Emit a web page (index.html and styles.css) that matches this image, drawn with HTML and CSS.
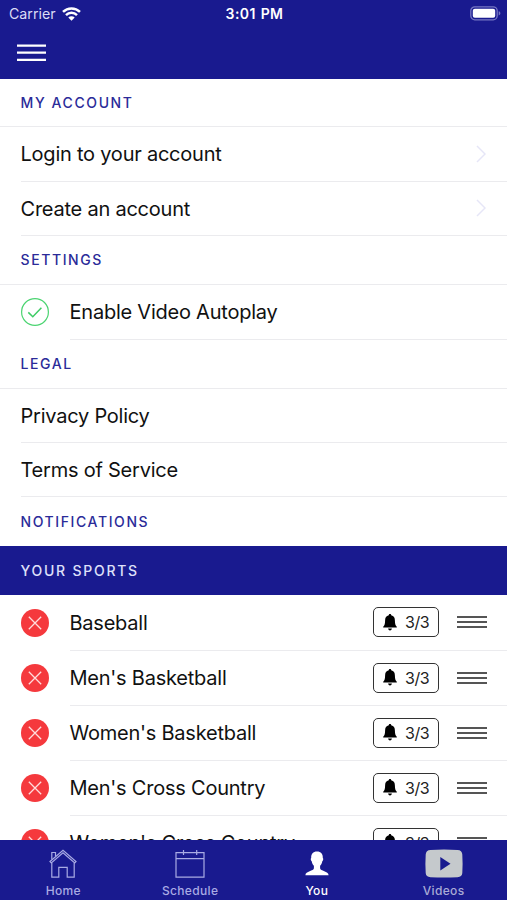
FILE: index.html
```
<!DOCTYPE html>
<html lang="en">
<head>
    <meta charset="utf-8">
    <title>My Account</title>
    <link rel="stylesheet" href="styles.css">
</head>
<body>
    <svg width="0" height="0" class="symbols">
        <symbol id="remove" viewBox="0 0 28 28">
            <circle cx="14" cy="14" r="14" fill="#f5393d"/>
            <path d="M7.8 7.8l12.4 12.4M20.2 7.8L7.8 20.2" stroke="#ffdcdc" stroke-width="1.3" fill="none"/>
        </symbol>
        <symbol id="bell" viewBox="0 0 14 17">
            <path d="M7 0c.8 0 1.2.5 1.2 1.3 2.6.6 3.7 2.6 3.7 5.1 0 3.6.6 5.2 1.9 6.3v.9H.2v-.9c1.300-1.100 1.900-2.700 1.900-6.300 0-2.500 1.100-4.500 3.700-5.100C5.800.5 6.200 0 7 0zM5.100 14.500h3.800c-.1 1.100-.8 1.900-1.900 1.900s-1.800-.8-1.900-1.900z"/>
        </symbol>
        <symbol id="chevron" viewBox="0 0 10 18">
            <path d="M1 1l8 8-8 8" fill="none" stroke="#e6e6f7" stroke-width="1.5"/>
        </symbol>
    </svg>

    <div class="app">
        <header class="header">
            <div class="status">
                <div class="carrier">
                    <span>Carrier</span>
                    <svg width="19" height="14" viewBox="0 0 19 14">
                        <g fill="none" stroke="#fff" stroke-width="2.5">
                            <path d="M1 4.900a12.200 12.200 0 0 1 17 0"/>
                            <path d="M4 8.100a7.900 7.900 0 0 1 11 0"/>
                        </g>
                        <path d="M9.500 13.700L6.300 10.500a4.600 4.600 0 0 1 6.400 0z" fill="#fff"/>
                    </svg>
                </div>
                <div class="time">3:01 PM</div>
                <svg class="battery" width="31" height="15" viewBox="0 0 31 15">
                    <rect x=".8" y=".8" width="26.4" height="13" rx="4" fill="none" stroke="#7777c3" stroke-width="1.3"/>
                    <rect x="2.8" y="2.8" width="22.4" height="9" rx="2" fill="#fff"/>
                    <path d="M28.700 5.200c2.200.7 2.200 3.500 0 4.200z" fill="#7777c3"/>
                </svg>
            </div>
            <svg class="menu" width="29" height="18" viewBox="0 0 29 18" stroke="#fff" stroke-width="2.2">
                <path d="M0 1.700h29M0 8.700h29M0 15.900h29"/>
            </svg>
        </header>

        <main class="content">
            <h2 class="section">MY ACCOUNT</h2>
            <div class="row"><span class="label">Login to your account</span><svg class="chevron"><use href="#chevron"/></svg></div>
            <div class="row"><span class="label">Create an account</span><svg class="chevron"><use href="#chevron"/></svg></div>

            <h2 class="section">SETTINGS</h2>
            <div class="row icon-row">
                <svg class="badge" viewBox="0 0 28 28">
                    <circle cx="14" cy="14" r="13.4" fill="none" stroke="#4bd471" stroke-width="1.2"/>
                    <path d="M7.300 14.400l4.500 4.300 8.600-9" fill="none" stroke="#3fcc66" stroke-width="1.5"/>
                </svg>
                <div class="cell"><span class="label">Enable Video Autoplay</span></div>
            </div>

            <h2 class="section">LEGAL</h2>
            <div class="row"><span class="label">Privacy Policy</span></div>
            <div class="row"><span class="label">Terms of Service</span></div>

            <h2 class="section last">NOTIFICATIONS</h2>
            <h2 class="section band">YOUR SPORTS</h2>

            <div class="row icon-row">
                <svg class="badge"><use href="#remove"/></svg>
                <div class="cell"><span class="label">Baseball</span><span class="alerts"><svg class="bell"><use href="#bell"/></svg>3/3</span><div class="drag"><i></i><i></i><i></i></div></div>
            </div>
            <div class="row icon-row">
                <svg class="badge"><use href="#remove"/></svg>
                <div class="cell"><span class="label">Men's Basketball</span><span class="alerts"><svg class="bell"><use href="#bell"/></svg>3/3</span><div class="drag"><i></i><i></i><i></i></div></div>
            </div>
            <div class="row icon-row">
                <svg class="badge"><use href="#remove"/></svg>
                <div class="cell"><span class="label">Women's Basketball</span><span class="alerts"><svg class="bell"><use href="#bell"/></svg>3/3</span><div class="drag"><i></i><i></i><i></i></div></div>
            </div>
            <div class="row icon-row">
                <svg class="badge"><use href="#remove"/></svg>
                <div class="cell"><span class="label">Men's Cross Country</span><span class="alerts"><svg class="bell"><use href="#bell"/></svg>3/3</span><div class="drag"><i></i><i></i><i></i></div></div>
            </div>
            <div class="row icon-row">
                <svg class="badge"><use href="#remove"/></svg>
                <div class="cell"><span class="label">Women's Cross Country</span><span class="alerts"><svg class="bell"><use href="#bell"/></svg>3/3</span><div class="drag"><i></i><i></i><i></i></div></div>
            </div>
        </main>

        <nav class="tabs">
            <div class="tab">
                <svg width="28" height="30" viewBox="0 0 28 30" fill="none" stroke="#a9abe4" stroke-width="1.2">
                    <path d="M1 12.500L14 1.200l13 11.300-1.300 1.400L14 3.800 2.300 13.900z"/>
                    <path d="M2.800 10.500V3.500h3.700v3.800"/>
                    <path d="M2.800 13.900v14.300h7V18.300h8.400v9.900h7V13.900"/>
                </svg>
                <span>Home</span>
            </div>
            <div class="tab">
                <svg width="30" height="30" viewBox="0 0 30 30" fill="none" stroke="#a9abe4" stroke-width="1.2">
                    <path d="M1 3.600h28v24.600H1zM1 9.600h28M8.500 1v5M21.700 1v5"/>
                </svg>
                <span>Schedule</span>
            </div>
            <div class="tab active">
                <svg width="24" height="30" viewBox="0 0 24 30" fill="#fff">
                    <path d="M12 2.500c4 0 6 2.500 5.800 6.500.7.300.6 2.800-.5 3.300-.4 2.200-1.200 3.500-2.200 4.500v2.400c0 3 8.500 2.600 8.500 7H.4c0-4.400 8.500-4 8.500-7v-2.400c-1-1-1.800-2.300-2.200-4.500-1.100-.5-1.200-3-.5-3.300C6 5 8 2.500 12 2.500z"/>
                </svg>
                <span>You</span>
            </div>
            <div class="tab videos">
                <svg width="38" height="30" viewBox="0 0 38 30">
                    <path d="M5.500.9Q19 0 32.500.9q4.600.2 4.800 4.600.6 9 0 18.500-.2 3.800-4.800 4.200-13.500.8-27 0Q.9 27.800.7 24 .1 15 .7 5.500.9 1.100 5.500.9z" fill="#c5c9cc"/>
                    <path d="M15.300 8v13.500L25.500 14.700z" fill="#191a8f"/>
                </svg>
                <span>Videos</span>
            </div>
        </nav>
    </div>
</body>
</html>
```
FILE: styles.css
```
* {
    box-sizing: border-box;
}
body {
    margin: 0;
    font-family: Inter, "Liberation Sans", sans-serif;
    background: #fff;
    color: #111;
}
.symbols {
    display: none;
}
.app {
    height: 900px;
    display: flex;
    flex-direction: column;
    overflow: hidden;
}
.header {
    flex: none;
    height: 78.5px;
    background: #191a8f;
    color: #fff;
}
.status {
    display: grid;
    grid-template-columns: 1fr auto 1fr;
    align-items: center;
    height: 27px;
    padding: 0 6px 0 9px;
}
.carrier {
    display: flex;
    align-items: center;
    gap: 6px;
    font-size: 14.2px;
    color: #dcdcf5;
}
.time {
    margin-right: 1px;
    font-size: 14px;
    font-weight: 600;
    letter-spacing: 0.4px;
    word-spacing: 1px;
}
.battery {
    justify-self: end;
}
.menu {
    display: block;
    margin: 17px 0 0 17px;
}
.content {
    flex: 1;
    min-height: 0;
    overflow: hidden;
}
.section {
    display: flex;
    align-items: center;
    height: 48.75px;
    margin: 0;
    padding-left: 20.5px;
    border-bottom: 1px solid #ebebee;
    font-size: 14px;
    font-weight: 500;
    letter-spacing: 1.6px;
    color: #2b2b99;
}
.section.last {
    border-bottom: none;
}
.section.band {
    height: 49.25px;
    border-bottom: none;
    background: #191a8f;
    color: #dfe0fa;
    letter-spacing: 1.75px;
}
.row {
    display: flex;
    align-items: center;
    height: 54.4px;
    margin-left: 21px;
    padding-right: 21px;
    border-bottom: 1px solid #ebebee;
}
.label {
    flex: 1;
    margin-left: -0.5px;
    padding-top: 1px;
    font-size: 20px;
    letter-spacing: -0.23px;
    white-space: nowrap;
}
.chevron {
    width: 10px;
    height: 18px;
}
.icon-row {
    height: 55.1px;
    padding-right: 0;
    border-bottom: none;
    gap: 21px;
}
.badge {
    flex: none;
    width: 28px;
    height: 28px;
}
.cell {
    flex: 1;
    display: flex;
    align-items: center;
    height: 100%;
    padding-right: 20px;
    border-bottom: 1px solid #ebebee;
}
.alerts {
    display: flex;
    align-items: center;
    gap: 8px;
    width: 66px;
    height: 30px;
    padding-left: 9px;
    border: 1.5px solid #333;
    border-radius: 5px;
    font-size: 16px;
    letter-spacing: -0.4px;
    color: #222;
}
.bell {
    width: 14px;
    height: 17px;
}
.drag {
    display: flex;
    flex-direction: column;
    gap: 3px;
    width: 30px;
    margin-left: 18px;
}
.drag i {
    height: 2px;
    background: #555;
}
.tabs {
    flex: none;
    display: grid;
    grid-template-columns: repeat(4, 1fr);
    height: 60px;
    background: #191a8f;
}
.tab {
    display: flex;
    flex-direction: column;
    align-items: center;
    gap: 4px;
    padding-top: 9px;
    font-size: 12px;
    font-weight: 500;
    letter-spacing: 0.35px;
    line-height: 15px;
    color: #a9abe4;
}
.tab.active {
    color: #fff;
}
.tab.videos {
    color: #a9abd6;
}
```
